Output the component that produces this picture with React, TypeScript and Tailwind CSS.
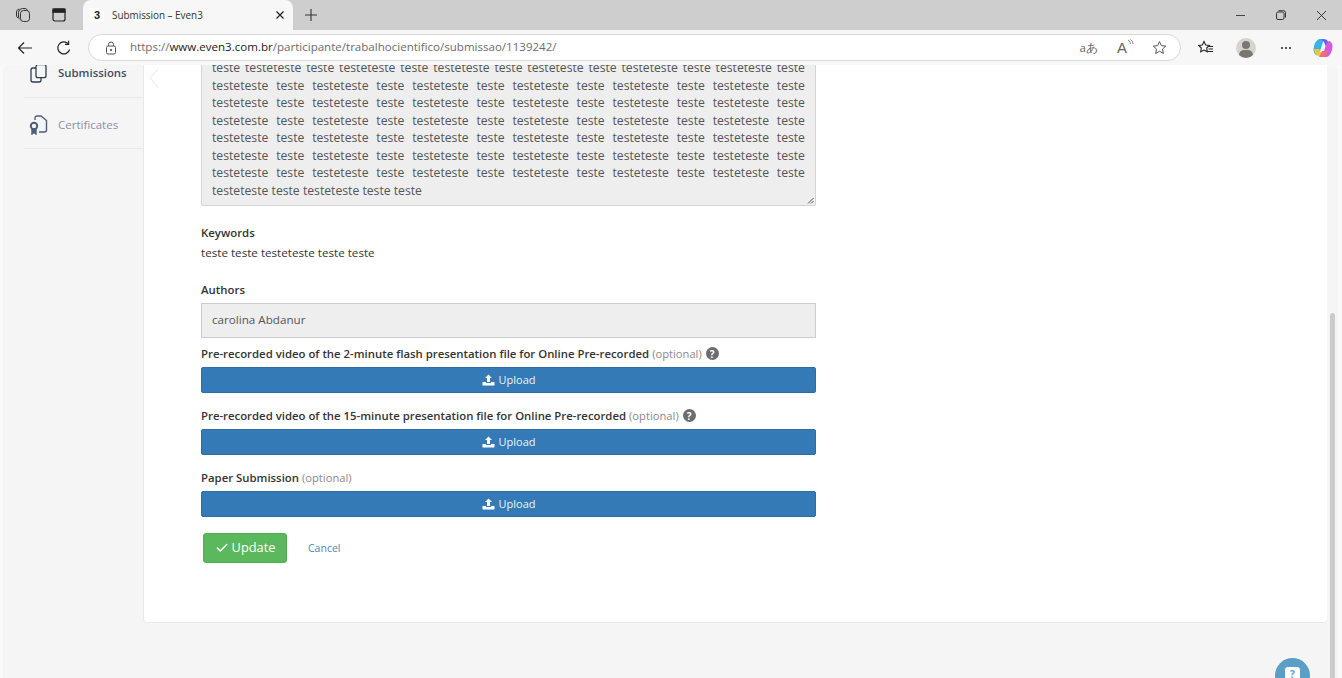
import React from "react";
import { Check } from "lucide-react";

const font = { fontFamily: '"Open Sans", sans-serif' };

function Justified({ words }: { words: string[] }) {
  return (
    <div className="flex justify-between h-[17.5px] leading-[17.5px] whitespace-nowrap">
      {words.map((w, i) => (
        <span key={i}>{w}</span>
      ))}
    </div>
  );
}

const rowA = ["teste", "testeteste", "teste", "testeteste", "teste", "testeteste", "teste", "testeteste", "teste", "testeteste", "teste", "testeteste", "teste"];
const rowB = ["testeteste", "teste", "testeteste", "teste", "testeteste", "teste", "testeteste", "teste", "testeteste", "teste", "testeteste", "teste"];

function UploadBtn() {
  return (
    <div className="h-[26px] bg-[#337ab7] border border-[#2e6da4] rounded-[2px] flex items-center justify-center text-[#eef4fa] text-[11px] gap-[4px]">
      <svg width="13" height="12" viewBox="0 0 13 12" fill="white">
        <path d="M6.5 0.5 L10 4 H8 V8 H5 V4 H3 Z" />
        <path d="M0.5 8 H4 V9 H9 V8 H12.5 V11 Q12.5 11.5 12 11.5 H1 Q0.5 11.5 0.5 11 Z" />
      </svg>
      <span>Upload</span>
    </div>
  );
}

function Help() {
  return (
    <span className="inline-flex items-center justify-center w-[13px] h-[13px] rounded-full bg-[#6b6b70] text-white text-[10px] font-bold ml-[4px] leading-none">?</span>
  );
}

export default function App() {
  return (
    <div className="w-[1342px] h-[678px] overflow-hidden flex flex-col bg-[#f9f9f9] text-[#333]" style={font}>
      {/* tab strip */}
      <div className="h-[30px] bg-[#cecece] flex items-end shrink-0 relative">
        <div className="w-[83px] h-[30px] flex items-center pl-[15px] gap-[21px] shrink-0">
          <svg width="16" height="16" viewBox="0 0 16 16" fill="none" stroke="#333" strokeWidth="1">
            <rect x="5.5" y="3.5" width="9" height="11" rx="3" />
            <path d="M5 12.5 A4 4 0 0 1 3.5 10 V5.5 A4 4 0 0 1 7.5 1.5 H10 A3 3 0 0 1 12.5 3.5" />
            <path d="M3 11 A3.5 3.5 0 0 1 1.5 8 V5 A3.5 3.5 0 0 1 4 2" />
          </svg>
          <svg width="14" height="14" viewBox="0 0 14 14" fill="none" stroke="#222" strokeWidth="1.2">
            <rect x="1" y="1" width="12" height="12" rx="2" />
            <rect x="1" y="1" width="12" height="3.2" fill="#222" />
          </svg>
        </div>
        <div className="w-[210px] h-[30px] bg-[#f7f7f7] rounded-t-[8px] flex items-center pl-[7px] pr-[8px] shrink-0">
          <div className="w-[14px] h-[14px] bg-white text-[11px] font-bold text-[#222] flex items-center justify-center" style={{ fontFamily: '"Liberation Sans", sans-serif' }}>3</div>
          <span className="ml-[8px] text-[9.9px] text-[#333] whitespace-nowrap flex-1">Submission – Even3</span>
          <svg width="10" height="10" viewBox="0 0 10 10" stroke="#222" strokeWidth="1.2">
            <path d="M1.5 1.5 L8.5 8.5 M8.5 1.5 L1.5 8.5" />
          </svg>
        </div>
        <div className="h-[30px] flex items-center ml-[11px]">
          <svg width="14" height="14" viewBox="0 0 14 14" stroke="#333" strokeWidth="1.1">
            <path d="M7 1 V13 M1 7 H13" />
          </svg>
        </div>
        <div className="flex-1" />
        <div className="h-[30px] flex items-center gap-[30px] pr-[15px]">
          <svg width="11" height="11" viewBox="0 0 11 11" stroke="#444" strokeWidth="1"><path d="M1 5.5 H10" /></svg>
          <svg width="10" height="10" viewBox="0 0 10 10" fill="none" stroke="#333" strokeWidth="1"><rect x="0.5" y="2" width="7.5" height="7.5" rx="1.5" /><path d="M2.5 0.7 H7.5 A2 2 0 0 1 9.5 2.7 V7.5" /></svg>
          <svg width="11" height="11" viewBox="0 0 11 11" stroke="#333" strokeWidth="1"><path d="M1 1 L10 10 M10 1 L1 10" /></svg>
        </div>
      </div>

      {/* toolbar */}
      <div className="h-[35px] bg-[#f7f7f7] flex items-center shrink-0 relative">
        <div className="w-[88px] flex items-center pl-[17px] gap-[23px] shrink-0">
          <svg width="16" height="14" viewBox="0 0 16 14" fill="none" stroke="#222" strokeWidth="1.2"><path d="M15 7 H1.5 M7 1.5 L1.5 7 L7 12.5" /></svg>
          <svg width="16" height="16" viewBox="0 0 16 16" fill="none" stroke="#222" strokeWidth="1.2"><path d="M13.6 9.5 A6 6 0 1 1 12 3.6" /><path d="M12.6 0.8 V4.4 H9" /></svg>
        </div>
        <div className="w-[1093px] h-[27px] bg-white border border-[#d8d8d8] rounded-full flex items-center pl-[16px] pr-[13px] shrink-0">
          <svg width="12" height="14" viewBox="0 0 12 14" fill="none" stroke="#555" strokeWidth="1"><rect x="1.5" y="5" width="9" height="8" rx="1.5" /><path d="M3.5 5 V3.5 A2.5 2.5 0 0 1 8.5 3.5 V5" /><circle cx="6" cy="9" r="0.7" fill="#555" /></svg>
          <span className="ml-[13px] pb-[1px] text-[11.55px] text-[#6b6b6b] whitespace-nowrap flex-1">https://<span className="text-[#1a1a1a]">www.even3.com.br</span>/participante/trabalhocientifico/submissao/1139242/</span>
          <span className="text-[11.5px] text-[#666] mr-[19px]">aあ</span>
          <span className="relative w-[16px] h-[16px] mr-[19px] block text-[15px] leading-[16px] text-[#666]" style={{ fontFamily: '"Liberation Sans", sans-serif' }}>
            A
            <svg width="7" height="7" viewBox="0 0 7 7" fill="none" stroke="#666" strokeWidth="0.8" className="absolute right-[-1px] top-[-1px]">
              <path d="M1 1 Q3.5 2 3.5 5 M3.5 0.5 Q6 2 6 5" />
            </svg>
          </span>
          <svg width="15" height="15" viewBox="0 0 24 24" fill="none" stroke="#555" strokeWidth="1.6"><path d="M12 2.5 L15 9 L22 9.8 L16.8 14.5 L18.2 21.5 L12 18 L5.8 21.5 L7.2 14.5 L2 9.8 L9 9 Z" /></svg>
        </div>
        <div className="flex items-center ml-[17px]">
          <svg width="16" height="15" viewBox="0 0 16 15" fill="none" stroke="#222" strokeWidth="1.1"><path d="M6 1.5 L7.7 5 L11.3 5.5 L8.7 8 L9.3 11.7 L6 10 L2.7 11.7 L3.3 8 L0.7 5.5 L4.3 5 Z" /><path d="M11 6.5 H15 M10.5 9 H15 M9.5 11.5 H15" /></svg>
          <div className="ml-[22px] w-[20px] h-[20px] rounded-full bg-[#d6d4d0] relative overflow-hidden">
            <div className="absolute left-[6px] top-[3px] w-[8px] h-[8px] rounded-full bg-[#7a7772]" />
            <div className="absolute left-[3px] top-[12px] w-[14px] h-[10px] rounded-full bg-[#7a7772]" />
          </div>
          <div className="flex gap-[2px] ml-[25px]">
            <i className="w-[2px] h-[2px] rounded-full bg-[#222]" />
            <i className="w-[2px] h-[2px] rounded-full bg-[#222]" />
            <i className="w-[2px] h-[2px] rounded-full bg-[#222]" />
          </div>
          <svg width="20" height="20" viewBox="0 0 20 20" className="ml-[22px]">
            <path d="M6 1 H11 L7 13 Q6 18 3 17 Q0.5 15.5 0.5 11 Q1.5 3 6 1 Z" fill="#35b6e6" />
            <path d="M8 1 Q12 0.5 14 2 L18 9 L13 9 L11 4 Z" fill="#6a5df0" />
            <path d="M14 19 H9 L13 7 Q14 3 17 3 Q19.5 5 19.5 9 Q18.5 17 14 19 Z" fill="#d35be0" />
            <path d="M1 11 L6 11 L8 15 Q8 18 6 18 Q2 18 1 11 Z" fill="#f5c23c" />
            <path d="M6 19 L13 19 L15 13 L9 13 Z" fill="#f26d7a" />
          </svg>
        </div>
      </div>

      {/* page */}
      <div className="flex-1 ml-[3px] w-[1335px] rounded-t-[6px] bg-[#f5f5f5] flex relative overflow-hidden min-h-0">
        {/* sidebar */}
        <div className="w-[140px] h-[84px] pl-[21px] shrink-0">
          <div className="h-[33px] border-b border-[#e7e9ea] flex items-start">
            <svg width="17" height="19" viewBox="0 0 17 19" fill="none" stroke="#2c3e50" strokeWidth="1.3" className="ml-[6px] mt-[-1px]">
              <rect x="6" y="0.7" width="10" height="13" rx="2" />
              <path d="M6 4 H3 A2 2 0 0 0 1 6 V16 A2 2 0 0 0 3 18 H9 A2 2 0 0 0 11 16 V14" />
            </svg>
            <span className="ml-[11px] mt-[-1px] text-[11.4px] leading-[17px] font-semibold text-[#3f4e60]">Submissions</span>
          </div>
          <div className="h-[51px] border-b border-[#e7e9ea] flex items-center pt-[3px]">
            <svg width="19" height="20" viewBox="0 0 19 20" fill="none" stroke="#4a5f7a" strokeWidth="1.4" className="ml-[5px]">
              <path d="M6 5 V3 A2 2 0 0 1 8 1 H12 L17.5 5.5 V15 A2 2 0 0 1 15.5 17 H10" />
              <circle cx="5" cy="11" r="3.2" strokeWidth="2" />
              <path d="M3 14 V19 L5 17.5 L7 19 V14 Z" fill="#4a5f7a" />
            </svg>
            <span className="ml-[10px] text-[11.5px] text-[#8793a5]">Certificates</span>
          </div>
        </div>

        {/* main card */}
        <div className="w-[1184px] h-[558px] bg-white border-b border-l border-[#e6e8ea] rounded-b-[4px] shrink-0 relative flex">
          <svg width="10" height="22" viewBox="0 0 10 22" fill="none" stroke="#e4e7ea" strokeWidth="1" className="absolute left-[5px] top-[2px]">
            <path d="M9 2 L1 11 L9 20" />
          </svg>
          <div className="ml-[57px] w-[615px] text-[11.65px] text-[#333]">
            {/* textarea */}
            <div className="h-[141px] bg-[#eeeeee] border border-[#d4d4d4] border-t-0 rounded-b-[2px] pl-[10px] pr-[10px] text-[12.2px] text-[#555] relative overflow-hidden">
              <div className="mt-[-6px]">
                <Justified words={rowA} />
                {Array.from({ length: 6 }).map((_, i) => (
                  <Justified key={i} words={rowB} />
                ))}
                <div className="leading-[17.5px] whitespace-nowrap">testeteste teste testeteste teste teste</div>
              </div>
              <svg width="7" height="7" viewBox="0 0 7 7" stroke="#555" strokeWidth="1" className="absolute right-[1px] bottom-[1px]">
                <path d="M1 6.5 L6.5 1 M4 6.5 L6.5 4" />
              </svg>
            </div>

            <div className="mt-[19px] h-[17px] leading-[15px] font-semibold text-[11.4px]">Keywords</div>
            <div className="mt-[3px] h-[17px] leading-[15px]">teste teste testeteste teste teste</div>

            <div className="mt-[19px] leading-[17px] font-semibold text-[11.4px]">Authors</div>
            <div className="mt-[5px] h-[35px] pb-[1px] bg-[#eeeeee] border border-[#cccccc] flex items-center pl-[10px] text-[#555]">carolina Abdanur</div>

            <div className="mt-[8px] h-[17px] pb-[2px] leading-[15px] whitespace-nowrap flex items-center">
              <span className="font-semibold text-[11.37px]">Pre-recorded video of the 2-minute flash presentation file for Online Pre-recorded</span>
              <span className="text-[#8a8a8a] ml-[3px] text-[11.2px]">(optional)</span>
              <Help />
            </div>
            <div className="mt-[4px]"><UploadBtn /></div>

            <div className="mt-[15px] h-[17px] pb-[2px] leading-[15px] whitespace-nowrap flex items-center">
              <span className="font-semibold text-[11.37px]">Pre-recorded video of the 15-minute presentation file for Online Pre-recorded</span>
              <span className="text-[#8a8a8a] ml-[3px] text-[11.2px]">(optional)</span>
              <Help />
            </div>
            <div className="mt-[4px]"><UploadBtn /></div>

            <div className="mt-[15px] h-[17px] pb-[2px] leading-[15px] whitespace-nowrap flex items-center">
              <span className="font-semibold text-[11.37px]">Paper Submission</span>
              <span className="text-[#8a8a8a] ml-[3px] text-[11.2px]">(optional)</span>
            </div>
            <div className="mt-[4px]"><UploadBtn /></div>

            <div className="mt-[16px] ml-[2px] flex items-center">
              <div className="w-[84px] h-[30px] bg-[#5cb85c] border border-[#4cae4c] rounded-[3px] flex items-center justify-center gap-[3px] text-white text-[12.8px]">
                <Check size={14} strokeWidth={2.5} />
                <span>Update</span>
              </div>
              <span className="ml-[21px] pt-[1px] text-[#4a86bd] text-[10.5px]">Cancel</span>
            </div>
          </div>
        </div>

        {/* scrollbar */}
        <div className="absolute left-[1327px] top-[248px] bottom-0 w-[5px] bg-[#cbcbcb] rounded-t-full" />
        <div className="absolute left-[1272px] top-[593px] w-[35px] h-[35px] rounded-full bg-[#5b9fc4] flex justify-center pt-[9px]">
          <div className="w-[15px] h-[15px] bg-white rounded-[3px] text-[#5b9fc4] text-[10px] font-bold leading-[15px] text-center">?</div>
        </div>
      </div>
    </div>
  );
}
